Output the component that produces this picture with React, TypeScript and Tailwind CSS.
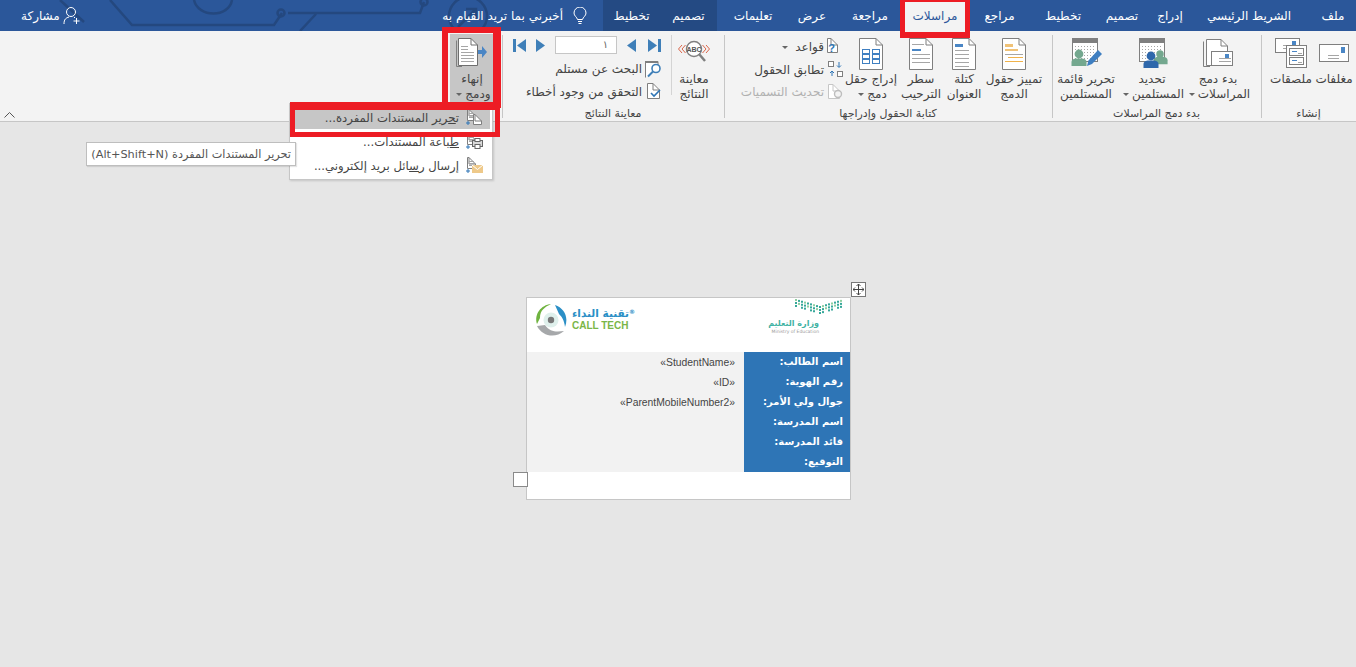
import type { ReactNode } from "react";

const FONT = "font-['DejaVu_Sans','Noto_Sans',sans-serif]";

// Small page outline with a folded corner, used by most ribbon icons
function Doc({ x = 0, y = 0, w = 24, h = 32, stroke = "#7f7f7f" }: { x?: number; y?: number; w?: number; h?: number; stroke?: string }) {
  return (
    <g fill="none" stroke={stroke}>
      <path d={`M${x + 0.5} ${y + 0.5}H${x + w - 7}L${x + w - 0.5} ${y + 7}V${y + h - 0.5}H${x + 0.5}Z`} fill="#fff" />
      <path d={`M${x + w - 7} ${y + 0.5}V${y + 7}H${x + w - 0.5}`} />
    </g>
  );
}

function Lines({ x, y, w, n, gap = 4, color = "#a6a6a6" }: { x: number; y: number; w: number; n: number; gap?: number; color?: string }) {
  return (
    <>
      {Array.from({ length: n }).map((_, i) => (
        <rect key={i} x={x} y={y + i * gap} width={w} height={1} fill={color} />
      ))}
    </>
  );
}

function Envelope({ x, y, w, h }: { x: number; y: number; w: number; h: number }) {
  return (
    <g>
      <rect x={x + 0.5} y={y + 0.5} width={w - 1} height={h - 1} fill="#fff" stroke="#7f7f7f" />
      <rect x={x + w - 8} y={y + 3} width={4} height={5} fill="#4a86c5" />
      <rect x={x + 8} y={y + h - 8} width={12} height={1} fill="#a6a6a6" />
      <rect x={x + 8} y={y + h - 5} width={12} height={1} fill="#a6a6a6" />
    </g>
  );
}

function EnvelopeIcon() {
  return (
    <svg width="30" height="22" viewBox="0 0 30 22">
      <rect x=".5" y=".5" width="29" height="17" fill="#fff" stroke="#7f7f7f" />
      <rect x="22" y="3" width="4" height="6" fill="#4a86c5" />
      <rect x="9" y="11" width="11" height="1" fill="#a6a6a6" />
      <rect x="9" y="14" width="11" height="1" fill="#a6a6a6" />
    </svg>
  );
}

function LabelsIcon() {
  return (
    <svg width="32" height="30" viewBox="0 0 32 30">
      <Envelope x={0} y={0} w={25} h={15} />
      <rect x="11.5" y="7.5" width="20" height="22" fill="#fff" stroke="#7f7f7f" />
      <rect x="14.5" y="10.5" width="14" height="7" fill="#fff" stroke="#7f7f7f" />
      <rect x="14.5" y="19.5" width="14" height="7" fill="#fff" stroke="#7f7f7f" />
      <rect x="17" y="13" width="5" height="1" fill="#4a86c5" />
      <rect x="17" y="22" width="5" height="1" fill="#4a86c5" />
      <rect x="23" y="15" width="4" height="1" fill="#a6a6a6" />
      <rect x="23" y="24" width="4" height="1" fill="#a6a6a6" />
    </svg>
  );
}

function StartMergeIcon() {
  return (
    <svg width="30" height="30" viewBox="0 0 30 30">
      <path d="M.5 3.5V28.5H7" fill="none" stroke="#7f7f7f" />
      <Doc x={3} y={1} w={22} h={27} />
      <Envelope x={8} y={13} w={22} h={15} />
    </svg>
  );
}

function Calendar() {
  return (
    <>
      <rect x="3.5" y=".5" width="25" height="23" fill="#fff" stroke="#7f7f7f" />
      <rect x="3" y="0" width="26" height="5" fill="#7f7f7f" />
      {[8, 11, 14, 17, 20].map((y) =>
        [6, 9, 12, 15, 18, 21, 24].map((x) => <rect key={`${x}-${y}`} x={x} y={y} width="1" height="1" fill="#a6a6a6" />)
      )}
    </>
  );
}

function Person({ cx, cy, color, scale = 1 }: { cx: number; cy: number; color: string; scale?: number }) {
  return (
    <g fill={color}>
      <circle cx={cx} cy={cy} r={4.4 * scale} />
      <path d={`M${cx - 7.5 * scale} ${cy + 12 * scale}v-4q0-3 4-3.5h${7 * scale}q4 .5 4 3.5v4z`} />
    </g>
  );
}

function UpdateListIcon() {
  return (
    <svg width="32" height="30" viewBox="0 0 32 30">
      <Calendar />
      <Person cx={24} cy={16} color="#74a88f" scale={0.85} />
      <Person cx={15} cy={18} color="#2e67ab" />
    </svg>
  );
}

function EditListIcon() {
  return (
    <svg width="34" height="30" viewBox="0 0 34 30">
      <Calendar />
      <Person cx={10} cy={16} color="#74a88f" />
      <path d="M18 28l1.5-5.5L29 12l4 4-10 10z" fill="#3f7fc1" />
    </svg>
  );
}

function HighlightIcon() {
  return (
    <svg width="24" height="32" viewBox="0 0 24 32">
      <Doc />
      <rect x="3" y="6" width="8" height="3" fill="#f0c277" />
      <rect x="3" y="11" width="13" height="2" fill="#f0c277" />
      <rect x="3" y="16" width="18" height="1" fill="#a6a6a6" />
      <rect x="6" y="19" width="15" height="1" fill="#f0b24a" />
      <rect x="3" y="23" width="18" height="1" fill="#f0b24a" />
    </svg>
  );
}

function AddressIcon() {
  return (
    <svg width="24" height="32" viewBox="0 0 24 32">
      <Doc />
      <rect x="3" y="6" width="8" height="3" fill="#4a86c5" />
      <Lines x={3} y={12} w={14} n={5} />
    </svg>
  );
}

function GreetingIcon() {
  return (
    <svg width="24" height="32" viewBox="0 0 24 32">
      <Doc />
      <Lines x={3} y={6} w={12} n={1} />
      <rect x="3" y="11" width="9" height="2" fill="#4a86c5" />
      <Lines x={3} y={16} w={18} n={3} />
    </svg>
  );
}

function InsertFieldIcon() {
  return (
    <svg width="24" height="32" viewBox="0 0 24 32">
      <Doc />
      <g fill="none" stroke="#3f7fc1">
        <rect x="3.5" y="11.5" width="7" height="4" />
        <rect x="13.5" y="11.5" width="7" height="4" />
        <rect x="3.5" y="16.5" width="7" height="4" />
        <rect x="13.5" y="16.5" width="7" height="4" />
        <rect x="3.5" y="21.5" width="7" height="4" />
        <rect x="13.5" y="21.5" width="7" height="4" />
      </g>
    </svg>
  );
}

function RulesIcon() {
  return (
    <svg width="17" height="18" viewBox="0 0 17 18">
      <Doc w={11} h={15} />
      <text x="8" y="14" fontSize="11" fontWeight="700" fill="#2e75b6" fontFamily="Liberation Sans">?</text>
    </svg>
  );
}

function MatchIcon() {
  return (
    <svg width="16" height="17" viewBox="0 0 16 17">
      <rect x=".5" y=".5" width="5" height="5" fill="#fff" stroke="#7f7f7f" />
      <rect x="9.5" y="10.5" width="5" height="5" fill="#fff" stroke="#7f7f7f" />
      <path d="M11 1v5M9 4.5l2 2 2-2" stroke="#2e75b6" fill="none" />
      <path d="M4 15V10M2 12l2-2 2 2" stroke="#2e75b6" fill="none" />
    </svg>
  );
}

function RefreshIcon() {
  return (
    <svg width="15" height="16" viewBox="0 0 15 16">
      <Doc w={12} h={15} stroke="#c6c6c6" />
      <circle cx="10" cy="10" r="3.5" fill="#f3f3f3" stroke="#bdbdbd" strokeWidth="1.4" />
    </svg>
  );
}

function PreviewIcon() {
  return (
    <svg width="34" height="26" viewBox="0 0 34 26">
      <circle cx="17" cy="9" r="7.5" fill="#fff" stroke="#7f7f7f" strokeWidth="1.4" />
      <path d="M22 14l6 7" stroke="#7f7f7f" strokeWidth="2.5" />
      <text x="17" y="11.5" textAnchor="middle" fontSize="7" fontWeight="700" fill="#555" fontFamily="Liberation Sans">ABC</text>
      <path d="M5 5L1.5 9 5 13M8.5 5L5 9l3.5 4M25.5 5L29 9l-3.5 4M29 5l3.5 4L29 13" fill="none" stroke="#d9654a" />
    </svg>
  );
}

function FirstIcon() {
  return (
    <svg width="13" height="13" viewBox="0 0 13 13">
      <rect x="0" y="0" width="3" height="13" fill="#3f7fb8" />
      <path d="M13 0v13L4 6.5z" fill="#3f7fb8" />
    </svg>
  );
}

function LastIcon() {
  return (
    <svg width="13" height="13" viewBox="0 0 13 13">
      <rect x="10" y="0" width="3" height="13" fill="#3f7fb8" />
      <path d="M0 0v13l9-6.5z" fill="#3f7fb8" />
    </svg>
  );
}

function Arrow({ dir }: { dir: "left" | "right" }) {
  return (
    <svg width="9" height="13" viewBox="0 0 9 13">
      <path d={dir === "left" ? "M9 0v13L0 6.5z" : "M0 0v13l9-6.5z"} fill="#3f7fb8" />
    </svg>
  );
}

function FindIcon() {
  return (
    <svg width="17" height="17" viewBox="0 0 17 17">
      <path d="M.5 16.5V.5H13V4" fill="#fff" stroke="#7f7f7f" />
      <rect x="0" y="0" width="13" height="2" fill="#7f7f7f" />
      <circle cx="11" cy="7.5" r="4" fill="#fff" stroke="#3f7fb8" strokeWidth="1.6" />
      <path d="M8 10.5L3 15.5" stroke="#3f7fb8" strokeWidth="2" />
    </svg>
  );
}

function CheckIcon() {
  return (
    <svg width="14" height="17" viewBox="0 0 14 17">
      <Doc w={13} h={16} />
      <path d="M4 10l3 3 6-6" fill="none" stroke="#2e75b6" strokeWidth="1.6" />
    </svg>
  );
}

function FinishIcon() {
  return (
    <svg width="32" height="29" viewBox="0 0 32 29">
      <path d="M.5 2.5V28.5H6" fill="none" stroke="#7f7f7f" />
      <Doc x={2} y={0} w={20} h={28} stroke="#6f6f6f" />
      <Lines x={5} y={8} w={7} n={2} gap={3} />
      <Lines x={5} y={14} w={13} n={4} gap={3} />
      <path d="M22 12h4V8l5 6-5 6v-4h-4z" fill="#4a86c5" />
    </svg>
  );
}

function MenuEditIcon() {
  return (
    <svg width="18" height="17" viewBox="0 0 18 17">
      <Doc x={1} y={0} w={9} h={12} />
      <Lines x={3} y={4} w={5} n={3} gap={2} />
      <Doc x={7} y={5} w={9} h={11} />
      <path d="M0 14h4M2 12v4" stroke="#2e75b6" />
    </svg>
  );
}

function MenuPrintIcon() {
  return (
    <svg width="18" height="17" viewBox="0 0 18 17">
      <Doc x={1} y={0} w={9} h={12} />
      <Lines x={3} y={4} w={5} n={3} gap={2} />
      <rect x="6.5" y="7.5" width="10" height="6" fill="#d9d9d9" stroke="#666" />
      <rect x="9" y="5.5" width="5" height="3" fill="#fff" stroke="#666" />
      <rect x="9" y="11.5" width="5" height="4" fill="#fff" stroke="#666" />
      <path d="M0 14h4M2 12v4" stroke="#2e75b6" />
    </svg>
  );
}

function MenuMailIcon() {
  return (
    <svg width="18" height="17" viewBox="0 0 18 17">
      <Doc x={1} y={0} w={9} h={12} />
      <Lines x={3} y={4} w={5} n={3} gap={2} />
      <rect x="6" y="8" width="11" height="8" fill="#eec98a" />
      <path d="M6 8l5.5 4.5L17 8" fill="none" stroke="#fff" />
      <path d="M0 14h4M2 12v4" stroke="#2e75b6" />
    </svg>
  );
}

function Caret({ color = "#666" }: { color?: string }) {
  return <span className="inline-block align-middle mx-[3px] border-x-[3px] border-t-[3px] border-x-transparent" style={{ borderTopColor: color }} />;
}

function BigButton({ width, icon, lines, caret }: { width: number; icon: ReactNode; lines: string[]; caret?: boolean }) {
  return (
    <div className="flex flex-col items-center shrink-0" style={{ width }}>
      <div className="h-[41px] pt-[7px] flex items-start justify-center">{icon}</div>
      <div className="text-[12px] leading-[15px] text-[#444] text-center whitespace-nowrap">
        <div>{lines[0]}</div>
        <div>
          {lines[1]}
          {caret && <Caret />}
        </div>
      </div>
    </div>
  );
}

function SmallRow({ icon, children, muted }: { icon: ReactNode; children: ReactNode; muted?: boolean }) {
  return (
    <div className={`h-[22.5px] flex items-center gap-[3px] text-[12px] whitespace-nowrap ${muted ? "text-[#b1b1b1]" : "text-[#444]"}`}>
      <span className="w-[17px] flex justify-center shrink-0">{icon}</span>
      <span>{children}</span>
    </div>
  );
}

function Group({ width, label, pr = 0, children }: { width: number; label?: string; pr?: number; children: ReactNode }) {
  return (
    <div className="h-full shrink-0 flex flex-col relative" style={{ width, paddingRight: pr }}>
      <div className="h-[76px] flex items-start">{children}</div>
      {label && <div className="h-[14px] text-[11px] leading-[14px] text-[#444] text-center whitespace-nowrap" style={{ marginRight: -pr }}>{label}</div>}
      {label && <div className="absolute left-0 top-[4px] bottom-[3px] w-px bg-[#c6c6c6]" />}
    </div>
  );
}

const TABS = [
  { label: "ملف", w: 46 },
  { label: "الشريط الرئيسي", w: 122 },
  { label: "إدراج", w: 36 },
  { label: "تصميم", w: 60 },
  { label: "تخطيط", w: 58 },
  { label: "مراجع", w: 69 },
  { label: "مراسلات", w: 60, active: true },
  { label: "مراجعة", w: 70 },
  { label: "عرض", w: 46 },
  { label: "تعليمات", w: 72 },
  { label: "تصميم", w: 57, context: true },
  { label: "تخطيط", w: 57, context: true },
];

const ROWS = [
  ["اسم الطالب:", "«StudentName»"],
  ["رقم الهوية:", "«ID»"],
  ["جوال ولي الأمر:", "«ParentMobileNumber2»"],
  ["اسم المدرسة:", ""],
  ["قائد المدرسة:", ""],
  ["التوقيع:", ""],
];

function Ministry() {
  const dots: [number, number][] = [];
  for (let i = 0; i < 16; i++) {
    for (let r = 0; r < 3; r++) {
      const drop = Math.abs(i - 8) / 8;
      if (r === 2 && i % 3 === 1) continue;
      dots.push([i * 3, (1 - drop) * 7 + r * 3]);
    }
  }
  return (
    <div className="flex flex-col items-end pr-[31px] pt-[1px] w-[130px]" dir="ltr">
      <svg width="48" height="17" viewBox="0 0 48 17" className="mr-[-24px] mb-[3px] self-end">
        {dots.map(([x, y], i) => (
          <rect key={i} x={x} y={y} width="2" height="2" fill={i % 4 === 0 ? "#8fcf9f" : "#37a89a"} />
        ))}
      </svg>
      <div dir="rtl" className="text-[8px] leading-[9px] font-bold text-[#3fb2a3]">وزارة التعليم</div>
      <div className="text-[4.5px] leading-[8px] text-[#9a9a9a] whitespace-nowrap">Ministry of Education</div>
    </div>
  );
}

function CallTechLogo() {
  return (
    <div className="flex items-center gap-[4px]" dir="ltr">
      <svg width="34" height="34" viewBox="0 0 34 34">
        <path d="M3 21C0 11 7 2 17 1c-6 3-11 6-11 14z" fill="#6fb33f" />
        <path d="M21 2c9 3 14 12 10 22-1-7-3-10-6-13z" fill="#2b8fc6" />
        <path d="M3 23c5 10 18 13 27 5-8 1-14 1-19-6z" fill="#a6a8aa" />
        <circle cx="17" cy="17" r="7.5" fill="#dff0ec" />
        <circle cx="17" cy="17" r="3.2" fill="#777" />
      </svg>
      <div className="flex flex-col items-start mt-[-2px]">
        <div dir="rtl" className="text-[10.5px] leading-[14px] font-bold text-[#2a8fc6]">
          <sup className="text-[6px] leading-none">®</sup>تقنية النداء
        </div>
        <div className="text-[10px] leading-[12px] font-bold text-[#7ab648] font-['Liberation_Sans',sans-serif]">CALL TECH</div>
      </div>
    </div>
  );
}

function TitleBar() {
  return (
    <div dir="rtl" className="h-[31px] bg-[#2b579a] flex relative overflow-hidden text-white text-[12px]">
      {/* faint circuit art printed behind the title bar */}
      <svg className="absolute left-0 top-0" width="620" height="31" viewBox="0 0 620 31" fill="none" stroke="#24487f" strokeWidth="2.5">
        <path d="M60 0L84 22M110 0l22 25h142l8-12M288 13h132l4-11M300 31l16-17M232 0c-3 18-34 18-38 0" />
        <circle cx="281" cy="13" r="3.5" />
        <circle cx="424" cy="2" r="3.5" />
        <circle cx="468" cy="16" r="19" />
        <path d="M458 27l18-18M466 9h10v10" />
      </svg>
      {TABS.map((t, i) => (
        <div
          key={i}
          className={`relative h-full flex items-center justify-center shrink-0 ${t.active ? "bg-[#f3f3f3] text-[#2b579a]" : ""} ${t.context ? "bg-[#244a83]" : ""}`}
          style={{ width: t.w }}
        >
          {t.label}
        </div>
      ))}
      <div className="relative flex items-center gap-[10px] pr-[16px] whitespace-nowrap">
        <svg width="14" height="18" viewBox="0 0 14 18" fill="none" stroke="#fff">
          <path d="M4.5 12.5C4 10 1 9 1 6a6 6 0 0 1 12 0c0 3-3 4-3.500 6.500z" />
          <path d="M5 14.500h4M5.500 16.500h3" />
        </svg>
        <span>أخبرني بما تريد القيام به</span>
      </div>
      <div className="relative mr-auto ml-[21px] flex items-center gap-[3px] whitespace-nowrap">
        <svg width="18" height="19" viewBox="0 0 18 19" fill="none" stroke="#fff">
          <circle cx="8" cy="6" r="4.500" />
          <path d="M1 18c0-5 2-6 5-7M11 11l1 1M13.500 12v6M10.500 15h6" />
        </svg>
        <span>مشاركة</span>
      </div>
    </div>
  );
}

function Ribbon() {
  return (
    <div dir="rtl" className="h-[91px] bg-[#f3f3f3] border-b border-[#c6c6c6] flex relative">
      <Group width={95} label="إنشاء">
        <BigButton width={44} icon={<span className="block pt-[6px]"><EnvelopeIcon /></span>} lines={["مغلفات"]} />
        <BigButton width={42} icon={<LabelsIcon />} lines={["ملصقات"]} />
      </Group>
      <Group width={209} pr={10} label="بدء دمج المراسلات">
        <BigButton width={66} icon={<StartMergeIcon />} lines={["بدء دمج", "المراسلات"]} caret />
        <BigButton width={66} icon={<UpdateListIcon />} lines={["تحديد", "المستلمين"]} caret />
        <BigButton width={66} icon={<EditListIcon />} lines={["تحرير قائمة", "المستلمين"]} />
      </Group>
      <Group width={328} pr={8} label="كتابة الحقول وإدراجها">
        <BigButton width={60} icon={<HighlightIcon />} lines={["تمييز حقول", "الدمج"]} />
        <BigButton width={40} icon={<AddressIcon />} lines={["كتلة", "العنوان"]} />
        <BigButton width={46} icon={<GreetingIcon />} lines={["سطر", "الترحيب"]} />
        <BigButton width={54} icon={<InsertFieldIcon />} lines={["إدراج حقل", "دمج"]} caret />
        <div className="pt-[5px] flex flex-col">
          <SmallRow icon={<RulesIcon />}>
            قواعد <Caret />
          </SmallRow>
          <SmallRow icon={<MatchIcon />}>تطابق الحقول</SmallRow>
          <SmallRow icon={<RefreshIcon />} muted>
            تحديث التسميات
          </SmallRow>
        </div>
      </Group>
      <Group width={222} pr={8} label="معاينة النتائج">
        <BigButton width={44} icon={<span className="block pt-[2px]"><PreviewIcon /></span>} lines={["معاينة", "النتائج"]} />
        <div className="mt-[4px] ml-[1px] w-px h-[60px] bg-[#d4d4d4]" />
        <div className="pt-[5px] pr-[5px] flex flex-col">
          <div className="h-[18px] mb-[4px] flex items-center">
            <span className="mr-[4px] ml-[12px]"><LastIcon /></span>
            <span className="ml-[10px]"><Arrow dir="left" /></span>
            <div className="w-[62px] h-[18px] bg-white border border-[#c6c6c6] text-[10px] leading-[16px] text-[#666] pr-[8px]">١</div>
            <span className="mr-[10px]"><Arrow dir="right" /></span>
            <span className="mr-[10px]"><FirstIcon /></span>
          </div>
          <div className="pr-[3px]">
            <SmallRow icon={<FindIcon />}>البحث عن مستلم</SmallRow>
            <SmallRow icon={<CheckIcon />}>التحقق من وجود أخطاء</SmallRow>
          </div>
        </div>
      </Group>
      <div className="w-[57px] shrink-0 pr-[8px] pt-[3px]">
        <div className="w-[44px] h-[73px] bg-[#c6c6c6] flex flex-col items-center">
          <div className="h-[38px] pt-[4px]"><FinishIcon /></div>
          <div className="text-[12px] leading-[15px] text-[#444] text-center whitespace-nowrap">
            <div>إنهاء</div>
            <div>
              ودمج
              <Caret />
            </div>
          </div>
        </div>
      </div>
      <svg className="absolute left-[4px] bottom-[3px]" width="11" height="6" viewBox="0 0 11 6" fill="none" stroke="#555">
        <path d="M.5 5.500l5-5 5 5" />
      </svg>
    </div>
  );
}

function Document() {
  return (
    <div className="ml-[526px] mt-[175px] w-[325px] h-[203px] bg-white border border-[#c6c6c6] relative">
      <div dir="rtl" className="h-[54px] flex items-start justify-between">
        <Ministry />
        <div className="pt-[5px] pl-[7px]"><CallTechLogo /></div>
      </div>
      <div dir="rtl" className="flex">
        <div className="w-[106px] bg-[#2e75b6] text-white font-bold text-[10px] pr-[7px]">
          {ROWS.map(([label]) => (
            <div key={label} className="h-[20px] leading-[20px] whitespace-nowrap">{label}</div>
          ))}
        </div>
        <div className="flex-1 bg-[#f2f2f2] text-[10.35px] text-[#444] pr-[9px]">
          {ROWS.map(([label, value]) => (
            <div key={label} className="h-[20px] leading-[22px] font-['Liberation_Sans',sans-serif]" dir="rtl">{value}</div>
          ))}
        </div>
      </div>
      {/* table move handle and end of table marker */}
      <div className="absolute left-[324px] top-[-16px] w-[15px] h-[15px] bg-white border border-[#777] flex items-center justify-center">
        <svg width="11" height="11" viewBox="0 0 11 11" fill="none" stroke="#444">
          <path d="M5.500 0v11M0 5.500h11M3.500 2l2-2 2 2M3.500 9l2 2 2-2M2 3.500l-2 2 2 2M9 3.500l2 2-2 2" />
        </svg>
      </div>
      <div className="absolute left-[-14px] top-[174px] w-[15px] h-[15px] bg-white border border-[#8a8a8a]" />
    </div>
  );
}

function MergeMenu() {
  const items = [
    { icon: <MenuEditIcon />, text: <>ت<span className="underline">ح</span>رير المستندات المفردة...</>, active: true },
    { icon: <MenuPrintIcon />, text: <><span className="underline">ط</span>باعة المستندات...</> },
    { icon: <MenuMailIcon />, text: <>إرسال ر<span className="underline">س</span>ائل بريد إلكتروني...</> },
  ];
  return (
    <div dir="rtl" className="absolute left-[289px] top-[103px] w-[204px] h-[77px] bg-white border border-[#c6c6c6] shadow-[1px_1px_2px_rgba(0,0,0,0.15)] pt-[1px] px-[2px] text-[11.7px] text-[#444]">
      {items.map((item, i) => (
        <div key={i} className={`h-[24px] flex items-center ${item.active ? "bg-[#c6c6c6]" : ""}`}>
          <span className="w-[31px] flex justify-center shrink-0">{item.icon}</span>
          <span className="whitespace-nowrap pt-[3px]">{item.text}</span>
        </div>
      ))}
    </div>
  );
}

export default function App() {
  return (
    <div className={`w-[1356px] h-[667px] overflow-hidden relative bg-[#e6e6e6] ${FONT}`}>
      <TitleBar />
      <Ribbon />
      <Document />
      <MergeMenu />
      <div dir="rtl" className="absolute left-[86px] top-[142px] w-[210px] h-[24px] bg-white border border-[#bebebe] shadow-[1px_1px_1px_rgba(0,0,0,0.1)] flex items-center pr-[4px] pt-[2px] text-[11.3px] text-[#555] whitespace-nowrap">
        تحرير المستندات المفردة (Alt+Shift+N)
      </div>
      {/* red call-outs drawn over the screenshot */}
      <div className="absolute left-[900px] top-0 w-[70px] h-[38px] border-x-[5px] border-t-[2px] border-b-[6px] border-[#ed1c24]" />
      <div className="absolute left-[442px] top-[27px] w-[59px] h-[81px] border-[6px] border-r-[8px] border-[#ed1c24]" />
      <div className="absolute left-[290px] top-[102px] w-[210px] h-[35px] border-x-[5px] border-t-[8px] border-b-[5px] border-[#ed1c24]" />
    </div>
  );
}
